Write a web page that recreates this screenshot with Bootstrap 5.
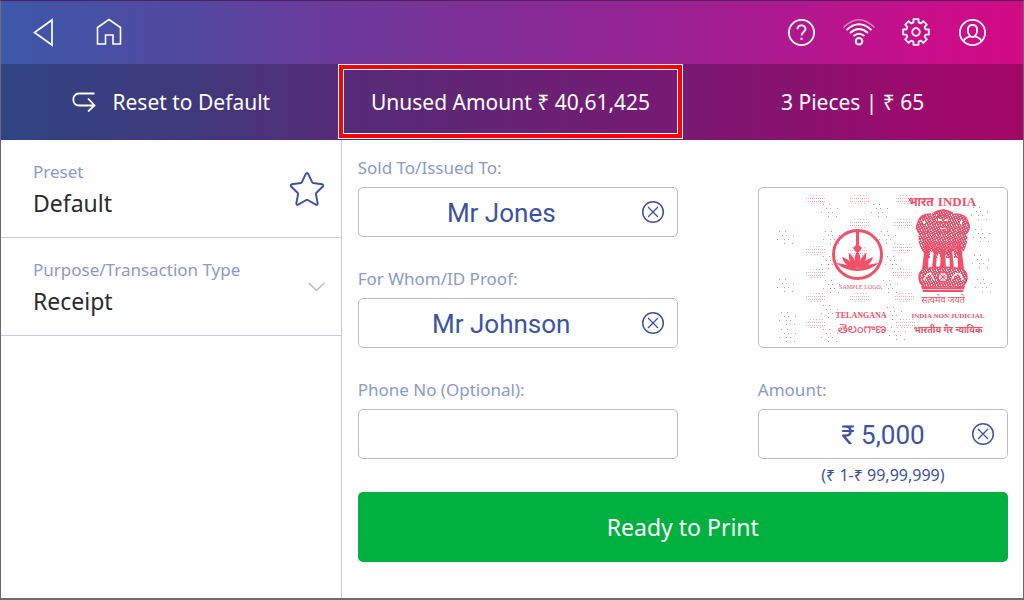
<!DOCTYPE html>
<html lang="en">
<head>
<meta charset="utf-8">
<meta name="viewport" content="width=device-width, initial-scale=1">
<title>Ready to Print</title>
<link href="https://cdn.jsdelivr.net/npm/bootstrap@5.3.0/dist/css/bootstrap.min.css" rel="stylesheet">
<style>
  :root { --ink: #3b53a5; --ink-soft: #8c99cb; --rule: #c5c9df; }
  body { font-family: "Noto Sans", sans-serif; background: #fff; color: #2a2a2a; }
  svg { display: block; flex: none; }
  .screen { min-height: 100vh; border: 1px solid #6e6a70; border-bottom-width: 2px; border-top-color: #51205a; }
  .masthead { background: linear-gradient(90deg, #3c58a8 0%, #5249a0 18%, #6b3a9b 32%, #9b2193 66%, #c80e8b 90%, #d20a84 100%); color: #fff; }
  .toolbar { height: 63px; padding: 0 36px 1px 28px; }
  .tool { background: none; border: 0; padding: 0; color: #fff; width: 29px; height: 32px; display: flex; align-items: center; justify-content: center; }
  .tools-left { gap: 36px; }
  .tools-right { gap: 28px; }
  .statusbar { background: rgba(0, 0, 0, .22); height: 76px; font-size: 21px; line-height: 30px; }
  .statusbar button { background: none; border: 0; color: #fff; gap: 16px; }
  .callout { margin: 0 -1px 1px -4px; box-shadow: inset 0 0 0 1px #fff, inset 0 0 0 5px #f00, inset 0 0 0 6px #fff; }
  .side { border-right: 1px solid var(--rule); }
  .side-item { height: 98px; padding: 20px 16px 0 32px; border-bottom: 1px solid var(--rule); position: relative; }
  .caption { display: block; font-size: 17px; line-height: 24px; color: var(--ink-soft); }
  .side-value { display: block; font-size: 23px; line-height: 38px; color: #2a2a2a; }
  select.side-value { appearance: none; border: 0; background: none; padding: 0; width: 100%; }
  .side-icon { position: absolute; right: 16px; top: 0; height: 100%; display: flex; align-items: center; pointer-events: none; }
  .star { background: none; border: 0; padding: 0; color: var(--ink); pointer-events: auto; }
  .chev { color: #bcbcbc; }
  .work { padding: 16px 15px 36px 16px; }
  .form-grid { display: grid; grid-template-columns: minmax(0, 320fr) minmax(0, 250fr); column-gap: 80px; }
  .form-grid .caption { margin-bottom: 7px; }
  .box { height: 50px; border: 1px solid #bdbdbd; border-radius: 5px; display: flex; }
  .box input { flex: 1; min-width: 0; border: 0; outline: 0; background: none; color: var(--ink); font: 26px/48px Roboto, sans-serif; text-align: center; padding: 2px 0 0 15px; }
  .box input.even { padding-left: 48px; }
  .clear { background: none; border: 0; padding: 0; width: 48px; display: flex; align-items: center; justify-content: center; color: var(--ink); }
  .row-gap { padding-bottom: 30px; }
  .stamp { grid-row: span 2; border: 1px solid #bdbdbd; border-radius: 5px; margin: 31px 0 30px; height: 161px; display: flex; justify-content: center; }
  .hint { font-size: 16px; line-height: 24px; margin: 4px 0 5px; color: var(--ink); text-align: center; }
  .print-btn { height: 70px; font-size: 23px; background: #00b140; border: 0; border-radius: 5px; color: #fff; width: 100%; }
  .deva { font-family: "Noto Sans Devanagari", "Noto Sans", sans-serif; }
  .telu { font-family: "Noto Sans Telugu", "Noto Sans", sans-serif; }
  .seal { font-family: "Liberation Serif", serif; font-weight: bold; }
</style>
</head>
<body>
<div class="screen d-flex flex-column">
  <header class="masthead">
    <nav class="toolbar d-flex justify-content-between align-items-center" aria-label="Main">
      <div class="tools-left d-flex">
        <button class="tool" type="button" aria-label="Back"><svg width="28" height="32" viewBox="0 0 28 32" fill="none" stroke="currentColor" stroke-width="1.7"><path d="M22 4v25L4.500 16.500z"/></svg></button>
        <button class="tool" type="button" aria-label="Home"><svg width="26" height="28" viewBox="0 0 26 28" fill="none" stroke="currentColor" stroke-width="1.600"><path d="M1.500 9.500 13 1.500l11.500 8V26H17v-9H9.500v9h-8z"/></svg></button>
      </div>
      <div class="tools-right d-flex">
        <button class="tool" type="button" aria-label="Help"><svg width="29" height="29" viewBox="0 0 29 29" fill="none" stroke="currentColor" stroke-width="1.900"><circle cx="14.500" cy="14.500" r="12.600"/><path d="M10.500 11.200c0-5 8-5 8-.2 0 3-4 3-4 6.500"/><path d="M14.500 19.700v2.200"/></svg></button>
        <button class="tool" type="button" aria-label="Wireless network"><svg width="34" height="30" viewBox="0 0 34 30" fill="none" stroke="currentColor" stroke-width="2"><path d="M1.500 10.500Q17-5 32.500 10.500" opacity=".45" stroke-width="1.600"/><path d="M4.500 13Q17 1.500 29.500 13M8 16q9-8 18 0M11.500 19q5.500-4.500 11 0"/><circle cx="17" cy="24.200" r="3.300"/></svg></button>
        <button class="tool" type="button" aria-label="Settings"><svg width="30" height="30" viewBox="-15 -15 30 30" fill="none" stroke="currentColor" stroke-width="1.800" stroke-linejoin="round"><path d="M-2.600-9.600-2.500-12.800h5l.1 3.200L4.900-8.600 7.300-10.800 10.800-7.300 8.600-4.900 9.600-2.600 12.800-2.500v5L9.600 2.600 8.600 4.900 10.800 7.300 7.300 10.800 4.900 8.600 2.600 9.600 2.500 12.800h-5L-2.600 9.600-4.900 8.600-7.300 10.800-10.800 7.300-8.600 4.900-9.600 2.600-12.800 2.500v-5L-9.600-2.600-8.600-4.900-10.800-7.300-7.300-10.800-4.900-8.600z"/><circle r="3.800"/></svg></button>
        <button class="tool" type="button" aria-label="Account"><svg width="29" height="29" viewBox="0 0 29 29" fill="none" stroke="currentColor" stroke-width="1.800"><circle cx="14.500" cy="14.500" r="12.600"/><path d="M14.500 7c-3 0-4.600 2-4.600 5 0 4 2 7.200 4.600 7.200s4.600-3.200 4.600-7.200c0-3-1.600-5-4.600-5zM5.500 23c1-2.500 3-3.300 6-4.300M23.500 23c-1-2.500-3-3.300-6-4.300"/></svg></button>
      </div>
    </nav>
    <div class="statusbar row g-0 text-center">
      <button type="button" class="col-4 d-flex align-items-center justify-content-center"><svg width="24" height="20" viewBox="0 0 24 20" fill="none" stroke="currentColor" stroke-width="1.800"><path d="M22.500 1.500H7C-.6 1.500-.6 13.500 7 13.500h15M16 6.500l6.500 7-6.500 6"/></svg>Reset to Default</button>
      <div class="col callout d-flex align-items-center justify-content-center">Unused Amount ₹ 40,61,425</div>
      <div class="col-4 d-flex align-items-center justify-content-center">3 Pieces | ₹ 65</div>
    </div>
  </header>

  <div class="row g-0 flex-grow-1">
    <aside class="col-4 side">
      <div class="side-item">
        <span class="caption">Preset</span>
        <span class="side-value">Default</span>
        <div class="side-icon"><button class="star" type="button" aria-label="Save as favourite"><svg width="36" height="36" viewBox="0 0 36 36" fill="none" stroke="currentColor" stroke-width="1.900" stroke-linejoin="round"><path d="M18 2c.6 0 1 .4 1.300 1l3.900 8.300c.2.400.5.600.9.700l9 1.300c1.200.2 1.600 1.300.8 2.200L27.200 22c-.3.400-.4.700-.3 1.200l1.800 9c.2 1.300-.8 2-1.900 1.400L18.700 29c-.5-.2-.9-.2-1.400 0l-8.100 4.600c-1.100.6-2.100-.1-1.900-1.400l1.800-9c.1-.5 0-.8-.3-1.200l-6.700-6.500c-.8-.9-.4-2 .8-2.200l9-1.300c.4-.1.700-.3.900-.7L16.700 3c.3-.6.700-1 1.300-1z"/></svg></button></div>
      </div>
      <div class="side-item">
        <label class="caption" for="purpose">Purpose/Transaction Type</label>
        <select class="side-value" id="purpose"><option>Receipt</option></select>
        <div class="side-icon chev"><svg width="17" height="10" viewBox="0 0 17 10" fill="none" stroke="currentColor" stroke-width="1.500"><path d="m.7 1 7.800 7.500L16.300 1"/></svg></div>
      </div>
    </aside>

    <main class="col-8 work">
      <form>
        <div class="form-grid">
          <div class="row-gap">
            <label class="caption" for="sold">Sold To/Issued To:</label>
            <div class="box"><input id="sold" type="text" value="Mr Jones"><button class="clear" type="button" aria-label="Clear sold to"><svg width="24" height="24" viewBox="0 0 24 24" fill="none" stroke="currentColor" stroke-width="1.500"><circle cx="12" cy="12" r="10.300"/><path d="m7 7 10 10M17 7 7 17" stroke-width="1.300"/></svg></button></div>
          </div>
          <div class="stamp">
            <svg width="248" height="159" viewBox="1 1 248 159" fill="#f0506a" role="img" aria-label="Sample stamp">
              <defs>
                <g id="cluster" fill="none" stroke="#f9b0bb" stroke-width="1">
                  <path d="M-6 -4.500h14" stroke-dasharray="1 2"/>
                  <path d="M-10 -1.500h20M-10 1.500h20" stroke-dasharray="1 1"/>
                  <path d="M-5 3.500h12" stroke-dasharray="1 2"/>
                </g>
                <g id="specks" fill="none" stroke="#f58698" stroke-width="1">
                  <path d="M-7 -5.500h12" stroke-dasharray="1 5"/>
                  <path d="M-4 -1.500h14" stroke-dasharray="1 3 1 6"/>
                  <path d="M-9 2.500h16" stroke-dasharray="1 6 1 3"/>
                  <path d="M-2 6.500h12" stroke-dasharray="1 7"/>
                </g>
                <pattern id="mane" width="5" height="5" patternUnits="userSpaceOnUse">
                  <rect width="5" height="5" fill="#f0506a"/>
                  <path d="M0 1h1v1H0zM2 0h1v1H2zM3 2h1v2H3zM1 3h1v1H1zM4 4h1v1H4z" fill="#fff"/>
                </pattern>
              </defs>
              <use href="#cluster" x="58" y="13"/><use href="#cluster" x="102" y="13"/><use href="#cluster" x="148" y="13"/>
              <use href="#cluster" x="58" y="64"/><use href="#cluster" x="102" y="37"/><use href="#cluster" x="145" y="37"/><use href="#cluster" x="145" y="62"/>
              <use href="#cluster" x="100" y="65"/><use href="#cluster" x="58" y="87"/><use href="#cluster" x="145" y="87"/><use href="#cluster" x="58" y="111"/><use href="#cluster" x="102" y="111"/><use href="#cluster" x="147" y="111"/>
              <use href="#cluster" x="58" y="137"/><use href="#cluster" x="148" y="137"/>
              <use href="#specks" x="28" y="50"/><use href="#specks" x="28" y="98"/><use href="#specks" x="30" y="131"/><use href="#specks" x="30" y="148"/>
              <use href="#specks" x="72" y="23"/><use href="#specks" x="122" y="23"/><use href="#specks" x="74" y="50"/><use href="#specks" x="130" y="50"/>
              <use href="#specks" x="72" y="75"/><use href="#specks" x="136" y="75"/><use href="#specks" x="74" y="99"/><use href="#specks" x="132" y="99"/>
              <use href="#specks" x="72" y="124"/><use href="#specks" x="136" y="126"/><use href="#specks" x="72" y="148"/><use href="#specks" x="140" y="146"/>
              <use href="#specks" x="222" y="26"/><use href="#specks" x="224" y="48"/><use href="#specks" x="223" y="74"/><use href="#specks" x="226" y="98"/>

              <circle cx="99.500" cy="67.500" r="24" fill="none" stroke="#f0506a" stroke-width="3"/>
              <path d="M98 44h3v14l3 3-3 4h-3l-3-4 3-3z"/>
              <path d="M99.500 64c4 5 4 12 0 18-4-6-4-13 0-18z"/>
              <path d="M91 66c5 4 7 9 8 16-6-3-9-9-8-16zM108 66c-5 4-7 9-8 16 6-3 9-9 8-16z"/>
              <path d="M84 70c6 2 11 6 14 12-7-1-12-5-14-12zM115 70c-6 2-11 6-14 12 7-1 12-5 14-12z"/>
              <path d="M78 76q11 1 21.500 6 10-5 21.500-6-10 8-21.500 8T78 76z"/>
              <text x="102" y="102" font-size="6" text-anchor="middle" font-family="Liberation Serif, serif">SAMPLE LOGO</text>
              <text x="103" y="131" font-size="8" text-anchor="middle" class="seal">TELANGANA</text>
              <text x="104" y="146" font-size="13" text-anchor="middle" class="telu">తెలంగాణ</text>

              <text x="163" y="19" font-size="12" text-anchor="middle" class="deva" font-weight="bold">भारत</text>
              <text x="199" y="19" font-size="13" text-anchor="middle" class="seal">INDIA</text>

              <!-- Lion capital: heads, mane, legs, drum -->
              <path d="M176 25q9-5 18 0l3 2q11-1 13 7 4 7-1 12 2 12-5 20l-4 5h-30l-4-5q-7-8-5-20-5-5-1-12 2-8 13-7z" fill="url(#mane)"/>
              <g fill="none" stroke="#f0506a" stroke-width="1.300">
                <path d="M176 26q9-6 18 0M178 30q7-4 14 0M173 27q-11 0-13 8-3 6 1 11 6 3 9-2M197 27q11 0 13 8 3 6-1 11-6 3-9-2"/>
                <path d="M179 35h4m4 0h4M178 43q7 5 14 0M162 37l4 1m42-1-4 1M164 45q4 1 6-2M206 45q-4 1-6-2"/>
              </g>
              <path d="M180 39h10l-2 5h-6zM164 50q21 10 41 0l-3 12-17 8-17-8z" opacity=".5"/>
              <g fill="#fff"><path d="M180 32h3v2h-3zM187 32h3v2h-3zM182 41h6v1h-6zM165 34h2v3h-2zM202 34h2v3h-2zM172 64l4 2v14l-4 2zM180 67h2v14h-4zM186 68h2v13h-2zM193 66l3-2v17h-3z"/></g>
              <path d="M167 58h4l-1 24h-6zM176 62h3l-1 20h-4zM183 62h4l1 20h-6zM191 62h3l2 20h-4zM199 58h4l3 24h-6z"/>
              <path d="M166 82q19-4 38 0 5 3 5 8 0 6-5 10h-38q-5-4-5-10 0-5 5-8z" fill="url(#mane)" stroke="#f0506a" stroke-width="1.500"/>
              <circle cx="185" cy="90" r="5" fill="#fff" stroke="#f0506a" stroke-width="1.500"/>
              <path d="M180 90h10M185 85v10M181.500 86.500l7 7M188.500 86.500l-7 7" stroke="#f0506a" stroke-width=".8"/>
              <path d="M166 93q3-8 7-6l3 6M194 92q3-7 8-5l3 6" fill="none" stroke="#fff" stroke-width="1.500"/>
              <path d="M163 99q22 4 44 0l-2 6h-40z"/><path d="M164 102.500h42" stroke="#fff" stroke-width=".7"/>
              <text x="185" y="116" font-size="9" text-anchor="middle" class="deva">सत्यमेव जयते</text>
              <text x="190" y="131" font-size="7" text-anchor="middle" class="seal">INDIA NON JUDICIAL</text>
              <text x="190" y="146" font-size="9" text-anchor="middle" class="deva" font-weight="bold">भारतीय गैर न्यायिक</text>
            </svg>
          </div>
          <div class="row-gap">
            <label class="caption" for="whom">For Whom/ID Proof:</label>
            <div class="box"><input id="whom" type="text" value="Mr Johnson"><button class="clear" type="button" aria-label="Clear ID proof"><svg width="24" height="24" viewBox="0 0 24 24" fill="none" stroke="currentColor" stroke-width="1.500"><circle cx="12" cy="12" r="10.300"/><path d="m7 7 10 10M17 7 7 17" stroke-width="1.300"/></svg></button></div>
          </div>
          <div>
            <label class="caption" for="phone">Phone No (Optional):</label>
            <div class="box"><input id="phone" type="tel"></div>
          </div>
          <div>
            <label class="caption" for="amount">Amount:</label>
            <div class="box"><input id="amount" class="even" type="text" value="₹ 5,000"><button class="clear" type="button" aria-label="Clear amount"><svg width="24" height="24" viewBox="0 0 24 24" fill="none" stroke="currentColor" stroke-width="1.500"><circle cx="12" cy="12" r="10.300"/><path d="m7 7 10 10M17 7 7 17" stroke-width="1.300"/></svg></button></div>
            <p class="hint">(₹ 1-₹ 99,99,999)</p>
          </div>
        </div>
        <button class="print-btn" type="submit">Ready to Print</button>
      </form>
    </main>
  </div>
</div>
<script src="https://cdn.jsdelivr.net/npm/bootstrap@5.3.0/dist/js/bootstrap.bundle.min.js"></script>
</body>
</html>
